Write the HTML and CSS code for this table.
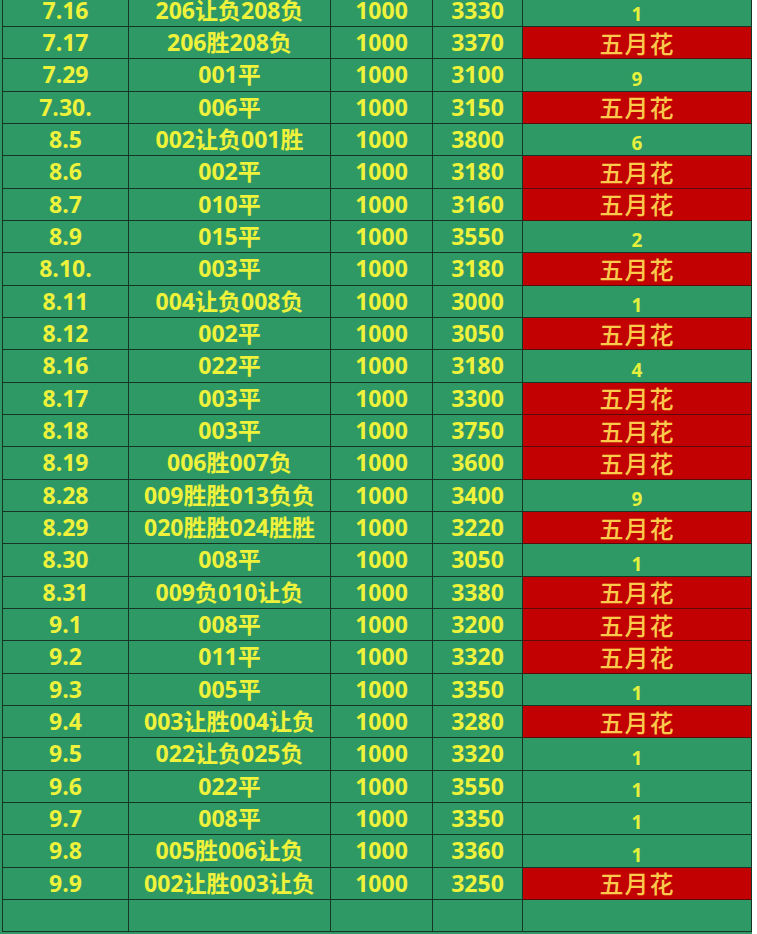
FILE: index.html
```html
<!DOCTYPE html>
<html lang="zh">
<head>
<meta charset="utf-8">
<link rel="stylesheet" href="styles.css">
</head>
<body>
<div class="sheet">
<div class="grid">
<div class="c">7.16</div><div class="c">206让负208负</div><div class="c">1000</div><div class="c">3330</div><div class="c n">1</div>
<div class="c">7.17</div><div class="c">206胜208负</div><div class="c">1000</div><div class="c">3370</div><div class="c r">五月花</div>
<div class="c">7.29</div><div class="c">001平</div><div class="c">1000</div><div class="c">3100</div><div class="c n">9</div>
<div class="c">7.30.</div><div class="c">006平</div><div class="c">1000</div><div class="c">3150</div><div class="c r">五月花</div>
<div class="c">8.5</div><div class="c">002让负001胜</div><div class="c">1000</div><div class="c">3800</div><div class="c n">6</div>
<div class="c">8.6</div><div class="c">002平</div><div class="c">1000</div><div class="c">3180</div><div class="c r">五月花</div>
<div class="c">8.7</div><div class="c">010平</div><div class="c">1000</div><div class="c">3160</div><div class="c r">五月花</div>
<div class="c">8.9</div><div class="c">015平</div><div class="c">1000</div><div class="c">3550</div><div class="c n">2</div>
<div class="c">8.10.</div><div class="c">003平</div><div class="c">1000</div><div class="c">3180</div><div class="c r">五月花</div>
<div class="c">8.11</div><div class="c">004让负008负</div><div class="c">1000</div><div class="c">3000</div><div class="c n">1</div>
<div class="c">8.12</div><div class="c">002平</div><div class="c">1000</div><div class="c">3050</div><div class="c r">五月花</div>
<div class="c">8.16</div><div class="c">022平</div><div class="c">1000</div><div class="c">3180</div><div class="c n">4</div>
<div class="c">8.17</div><div class="c">003平</div><div class="c">1000</div><div class="c">3300</div><div class="c r">五月花</div>
<div class="c">8.18</div><div class="c">003平</div><div class="c">1000</div><div class="c">3750</div><div class="c r">五月花</div>
<div class="c">8.19</div><div class="c">006胜007负</div><div class="c">1000</div><div class="c">3600</div><div class="c r">五月花</div>
<div class="c">8.28</div><div class="c">009胜胜013负负</div><div class="c">1000</div><div class="c">3400</div><div class="c n">9</div>
<div class="c">8.29</div><div class="c">020胜胜024胜胜</div><div class="c">1000</div><div class="c">3220</div><div class="c r">五月花</div>
<div class="c">8.30</div><div class="c">008平</div><div class="c">1000</div><div class="c">3050</div><div class="c n">1</div>
<div class="c">8.31</div><div class="c">009负010让负</div><div class="c">1000</div><div class="c">3380</div><div class="c r">五月花</div>
<div class="c">9.1</div><div class="c">008平</div><div class="c">1000</div><div class="c">3200</div><div class="c r">五月花</div>
<div class="c">9.2</div><div class="c">011平</div><div class="c">1000</div><div class="c">3320</div><div class="c r">五月花</div>
<div class="c">9.3</div><div class="c">005平</div><div class="c">1000</div><div class="c">3350</div><div class="c n">1</div>
<div class="c">9.4</div><div class="c">003让胜004让负</div><div class="c">1000</div><div class="c">3280</div><div class="c r">五月花</div>
<div class="c">9.5</div><div class="c">022让负025负</div><div class="c">1000</div><div class="c">3320</div><div class="c n">1</div>
<div class="c">9.6</div><div class="c">022平</div><div class="c">1000</div><div class="c">3550</div><div class="c n">1</div>
<div class="c">9.7</div><div class="c">008平</div><div class="c">1000</div><div class="c">3350</div><div class="c n">1</div>
<div class="c">9.8</div><div class="c">005胜006让负</div><div class="c">1000</div><div class="c">3360</div><div class="c n">1</div>
<div class="c">9.9</div><div class="c">002让胜003让负</div><div class="c">1000</div><div class="c">3250</div><div class="c r">五月花</div>
<div class="c"></div><div class="c"></div><div class="c"></div><div class="c"></div><div class="c"></div>
</div>
</div>
</body>
</html>
```
FILE: styles.css
```css
html, body {
  margin: 0;
  padding: 0;
  background: #ffffff;
}
.sheet {
  width: 752px;
  height: 934px;
  overflow: hidden;
  background: #2f9966;
  padding-left: 2px;
  box-sizing: border-box;
}
.grid {
  display: grid;
  grid-template-columns: 126px 202px 102px 90px 229px;
  grid-auto-rows: 32.34px;
  margin-top: -5.34px;
  border-left: 1px solid #163524;
  font-family: "Open Sans", "Noto Sans CJK SC", sans-serif;
  font-weight: 700;
  font-size: 23px;
  color: #eef23a;
}
.c {
  border-right: 1px solid #163524;
  border-bottom: 1px solid #163524;
  display: flex;
  align-items: center;
  justify-content: center;
  white-space: nowrap;
  line-height: 1;
  background: #2f9966;
}
.n {
  align-items: flex-end;
  padding-bottom: 2px;
  font-size: 19px;
  color: #e4f03c;
  box-sizing: border-box;
}
.r {
  background: #c20202;
  color: #fbc94c;
  font-family: "Noto Sans CJK SC", sans-serif;
  font-weight: 500;
  font-size: 24px;
  letter-spacing: 1px;
  border-bottom-color: #5a0a0a;
}
```
